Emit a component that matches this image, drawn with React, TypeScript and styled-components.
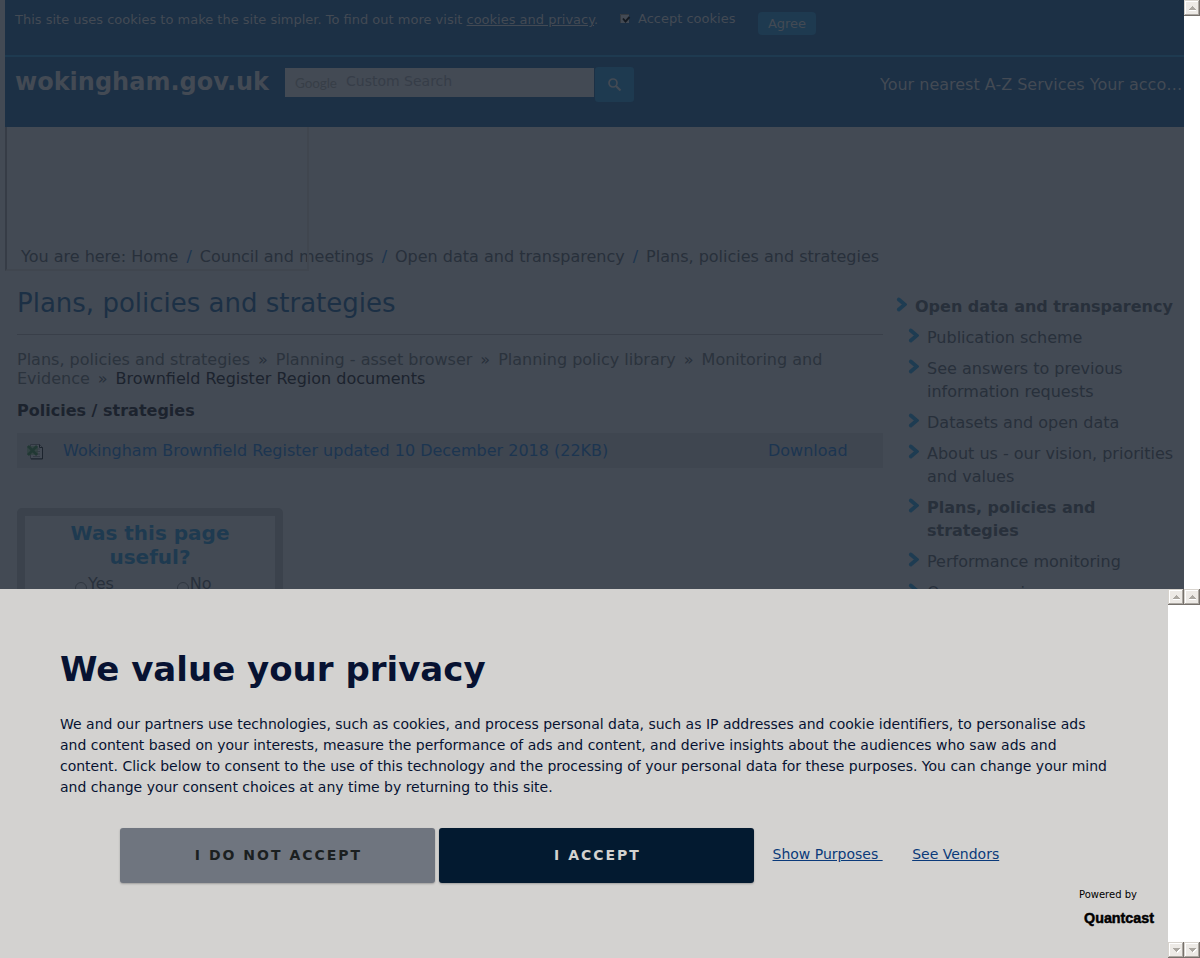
import React from "react";
import styled, { createGlobalStyle } from "styled-components";

const c = {
  page: "#434a54",
  navy: "#1c3045",
  teal: "#1e3a50",
  text: "#28303b",
  crumb: "#2b333d",
  strong: "#1c232e",
  link: "#1c3550",
  band: "#3f4650",
  frame: "#3b424c",
  modal: "#d3d2d0",
  ink: "#071232",
};

const Global = createGlobalStyle`
  * { box-sizing: border-box; }
  body { margin: 0; background: #fff; font: 16px/19px "DejaVu Sans", sans-serif; color: ${c.text}; overflow: hidden; }
  h1, h2, h3, p, ul { margin: 0; padding: 0; font-size: inherit; }
`;

const Screen = styled.div`
  width: 1200px;
  height: 958px;
  display: flex;
  flex-direction: column;
  overflow: hidden;
`;
const TopArea = styled.div`
  height: 589px;
  display: flex;
  overflow: hidden;
`;
const Page = styled.div`
  width: 1184px;
  height: 589px;
  padding-left: 5px;
  background: ${c.page};
  overflow: hidden;
`;
const CookieBar = styled.div`
  height: 57px;
  display: flex;
  align-items: flex-start;
  padding: 12px 0 0 10px;
  background: ${c.navy};
  border-bottom: 2px solid ${c.teal};
  color: ${c.page};
  font-size: 13px;
  line-height: 15px;
  white-space: nowrap;
`;
const CookieText = styled.p`
  width: 605px;
`;
const AcceptLabel = styled.div`
  display: flex;
  width: 138px;
  gap: 7px;
  line-height: 14px;
`;
const TickIcon = styled.svg`
  width: 11px;
  height: 11px;
  margin-top: 2px;
`;
const AgreeButton = styled.div`
  width: 58px;
  height: 23px;
  border-radius: 4px;
  background: ${c.teal};
  text-align: center;
  line-height: 23px;
`;
const Header = styled.header`
  height: 70px;
  display: flex;
  align-items: flex-start;
  padding-left: 10px;
  background: ${c.navy};
  color: ${c.page};
  white-space: nowrap;
`;
const SiteName = styled.div`
  width: 270px;
  padding-top: 11px;
  font-size: 24px;
  line-height: 29px;
  font-weight: bold;
`;
const SearchField = styled.div`
  width: 309px;
  height: 29px;
  margin: 11px 1px 0 0;
  padding-left: 9px;
  display: flex;
  background: ${c.page};
  color: #363d48;
  font-size: 14px;
  line-height: 27px;
`;
const GoogleMark = styled.svg`
  width: 52px;
  height: 29px;
`;
const SearchButton = styled.div`
  width: 39px;
  height: 35px;
  margin-top: 10px;
  padding: 11px 0 0 13px;
  border-radius: 3px;
  background: ${c.teal};
  line-height: 0;
`;
const Nav = styled.nav`
  margin: 18px 0 0 246px;
`;
const Main = styled.div`
  position: relative;
  display: flex;
`;
const EmptyFrame = styled.div`
  position: absolute;
  left: 0;
  top: 0;
  width: 304px;
  height: 144px;
  border: 2px solid #40464f;
  border-left-color: #363c46;
  border-top: 0;
`;
const Content = styled.main`
  width: 891px;
  padding: 120px 0 0 12px;
  white-space: nowrap;
`;
const Trail = styled.div`
  padding-left: 4px;
  span { color: ${c.link}; margin: 0 8px; }
`;
const Title = styled.h1`
  width: 866px;
  height: 69px;
  padding-top: 22px;
  font-size: 26px;
  line-height: 31px;
  font-weight: normal;
  color: ${c.navy};
  border-bottom: 1px solid #393f49;
`;
const Crumbs = styled.div`
  padding-top: 15px;
  color: ${c.crumb};
  span { color: ${c.text}; margin: 0 8px; }
  b { font-weight: normal; color: ${c.strong}; }
`;
const Section = styled.h2`
  padding-top: 13px;
  color: ${c.strong};
  line-height: 19px;
`;
const FileRow = styled.div`
  width: 866px;
  height: 35px;
  margin-top: 13px;
  padding: 8px 0 0 10px;
  display: flex;
  background: ${c.band};
  color: ${c.link};
`;
const FileIcon = styled.svg`
  width: 17px;
  height: 17px;
  margin: 2px 19px 0 0;
`;
const FileName = styled.div`
  width: 705px;
`;
const Survey = styled.div`
  width: 266px;
  height: 200px;
  margin-top: 40px;
  border: 8px solid ${c.frame};
  border-radius: 5px;
  padding-top: 5px;
`;
const SurveyTitle = styled.h3`
  color: ${c.teal};
  font-size: 20px;
  line-height: 24px;
  text-align: center;
`;
const Choices = styled.div`
  display: flex;
  gap: 63px;
  padding: 5px 0 0 50px;
`;
const Choice = styled.div`
  display: flex;
  gap: 1px;
`;
const Radio = styled.span`
  width: 12px;
  height: 12px;
  margin-top: 8px;
  border: 1px solid #303741;
  border-radius: 50%;
`;
const Sidebar = styled.ul`
  width: 288px;
  padding-top: 168px;
  list-style: none;
  line-height: 23px;
  white-space: nowrap;
`;
const SideItem = styled.li<{ $top?: boolean; $bold?: boolean }>`
  display: flex;
  gap: 8px;
  margin-bottom: 8px;
  padding-left: ${(p) => (p.$top ? 0 : 12)}px;
  font-weight: ${(p) => (p.$bold ? "bold" : "normal")};
`;
const Chevron = styled.svg`
  width: 11px;
  height: 15px;
  margin-top: 2px;
`;
const BottomArea = styled.div`
  height: 369px;
  display: flex;
`;
const Modal = styled.section`
  width: 1168px;
  height: 369px;
  padding: 60px 0 0 60px;
  background: ${c.modal};
  color: ${c.ink};
  white-space: nowrap;
`;
const ModalTitle = styled.h2`
  font-size: 34px;
  line-height: 40px;
`;
const ModalText = styled.p`
  padding-top: 25px;
  font-size: 13.99px;
  line-height: 21px;
`;
const Actions = styled.div`
  display: flex;
  padding: 30px 0 0 60px;
  font-size: 14px;
`;
const ActionButton = styled.div<{ $primary?: boolean }>`
  width: 315px;
  height: 55px;
  margin-right: 4px;
  padding-left: 2px;
  border-radius: 3px;
  background: ${(p) => (p.$primary ? "#031a30" : "#6f757f")};
  color: ${(p) => (p.$primary ? "#d3d2d0" : "#1b1f20")};
  box-shadow: 0 1px 2px rgba(0, 0, 0, 0.25);
  text-align: center;
  font-weight: bold;
  letter-spacing: 2px;
  line-height: 54px;
`;
const ModalLink = styled.a`
  margin: 0 15px 0 14.5px;
  color: #0a3a7a;
  text-decoration: underline;
  line-height: 52px;
  white-space: pre;
`;
const Powered = styled.div`
  display: flex;
  flex-direction: column;
  width: 80px;
  margin: 5px 0 0 1019px;
  font-size: 10px;
  line-height: 13px;
  color: #000;
`;
const QuantcastMark = styled.svg`
  width: 76px;
  height: 22px;
  margin-top: 6px;
`;
const Track = styled.div`
  width: 16px;
  height: 100%;
  display: flex;
  flex-direction: column;
  justify-content: space-between;
  background: #fff;
`;
const ArrowBox = styled.svg`
  width: 16px;
  height: 16px;
  display: block;
`;

function ScrollArrow({ down }: { down?: boolean }) {
  return (
    <ArrowBox viewBox="0 0 16 16" shapeRendering="crispEdges">
      <rect width="16" height="16" fill="#76716c" />
      <rect width="15" height="15" fill="#d8d4ce" />
      <rect x="1" y="1" width="14" height="14" fill="#aca8a2" />
      <rect x="1" y="1" width="13" height="13" fill="#fff" />
      <rect x="2" y="2" width="12" height="12" fill="#edeae6" />
      {down ? (
        <>
          <path d="M5 7h8l-4 4z" fill="#fff" />
          <path d="M4 6h8l-4 4z" fill="#aca8a2" />
        </>
      ) : (
        <>
          <path d="M5 10h7v1H5z" fill="#fff" />
          <path d="M4 10l4-4 4 4z" fill="#aca8a2" />
        </>
      )}
    </ArrowBox>
  );
}

const sideItems: { lines: string[]; top?: boolean; bold?: boolean }[] = [
  { lines: ["Open data and transparency"], top: true, bold: true },
  { lines: ["Publication scheme"] },
  { lines: ["See answers to previous", "information requests"] },
  { lines: ["Datasets and open data"] },
  { lines: ["About us - our vision, priorities", "and values"] },
  { lines: ["Plans, policies and", "strategies"], bold: true },
  { lines: ["Performance monitoring"] },
  { lines: ["Open mapping"] },
];

const Lines = ({ lines }: { lines: string[] }) => (
  <div>
    {lines.map((l) => (
      <div key={l}>{l}</div>
    ))}
  </div>
);

export default function App() {
  return (
    <Screen>
      <Global />
      <TopArea>
        <Page>
          <CookieBar>
            <CookieText>
              This site uses cookies to make the site simpler. To find out more visit <u>cookies and privacy</u>.
            </CookieText>
            <AcceptLabel>
              <TickIcon viewBox="0 0 11 11">
                <path d="M0 0h9v9H0z" fill="#434a54" />
                <path d="M.5 9V.5H9" fill="none" stroke="#343a41" />
                <path d="M3 4.500l2.500 3L9.500 3" fill="none" stroke="#141a22" strokeWidth="1.900" />
              </TickIcon>
              Accept cookies
            </AcceptLabel>
            <AgreeButton>Agree</AgreeButton>
          </CookieBar>
          <Header>
            <SiteName>wokingham.gov.uk</SiteName>
            <SearchField>
              <GoogleMark>
                <text x="1" y="19.5" fontFamily="Lato, sans-serif" fontSize="13.5" textLength="42" fill="#373e47">
                  Google
                </text>
              </GoogleMark>
              Custom Search
            </SearchField>
            <SearchButton>
              <svg width="14" height="14" viewBox="0 0 14 14" fill="none" stroke="#434a54">
                <circle cx="5" cy="5" r="4" strokeWidth="1.7" />
                <path d="M8 8l4.500 4.500" strokeWidth="2.200" />
              </svg>
            </SearchButton>
            <Nav>Your nearest A-Z Services Your acco…</Nav>
          </Header>
          <Main>
            <EmptyFrame />
            <Content>
              <Trail>
                You are here: Home<span>/</span>Council and meetings<span>/</span>Open data and transparency
                <span>/</span>Plans, policies and strategies
              </Trail>
              <Title>Plans, policies and strategies</Title>
              <Crumbs>
                Plans, policies and strategies<span>»</span>Planning - asset browser<span>»</span>Planning policy
                library<span>»</span>Monitoring and
                <br />
                Evidence<span>»</span>
                <b>Brownfield Register Region documents</b>
              </Crumbs>
              <Section>Policies / strategies</Section>
              <FileRow>
                <FileIcon viewBox="0 0 17 17">
                  <path d="M3.500 1.500h9l3 3v11h-12z" fill="#434a54" stroke="#2f3640" />
                  <path d="M12.500 1.500v3h3v11.500H4" fill="none" stroke="#1c242e" />
                  <path d="M9 6h4M9 8.500h4M9 11h4M6 13.500h7" stroke="#343b45" />
                  <path d="M0 3h11v9H0z" fill="#2f423f" fillOpacity="0.7" />
                  <path d="M1 3l9 9M10 3l-9 9" stroke="#213834" strokeWidth="2.600" />
                </FileIcon>
                <FileName>Wokingham Brownfield Register updated 10 December 2018 (22KB)</FileName>
                Download
              </FileRow>
              <Survey>
                <SurveyTitle>
                  Was this page
                  <br />
                  useful?
                </SurveyTitle>
                <Choices>
                  <Choice>
                    <Radio />
                    Yes
                  </Choice>
                  <Choice>
                    <Radio />
                    No
                  </Choice>
                </Choices>
              </Survey>
            </Content>
            <Sidebar>
              {sideItems.map((item) => (
                <SideItem key={item.lines[0]} $top={item.top} $bold={item.bold}>
                  <Chevron viewBox="0 0 11 15">
                    <path
                      d="M2.800 2.500l6 5-6 5"
                      fill="none"
                      stroke="#1e3c52"
                      strokeWidth="3.700"
                      strokeLinecap="round"
                    />
                  </Chevron>
                  <Lines lines={item.lines} />
                </SideItem>
              ))}
            </Sidebar>
          </Main>
        </Page>
        <Track>
          <ScrollArrow />
        </Track>
      </TopArea>
      <BottomArea>
        <Modal>
          <ModalTitle>We value your privacy</ModalTitle>
          <ModalText>
            We and our partners use technologies, such as cookies, and process personal data, such as IP addresses and
            cookie identifiers, to personalise ads
            <br />
            and content based on your interests, measure the performance of ads and content, and derive insights about
            the audiences who saw ads and
            <br />
            content. Click below to consent to the use of this technology and the processing of your personal data for
            these purposes. You can change your mind
            <br />
            and change your consent choices at any time by returning to this site.
          </ModalText>
          <Actions>
            <ActionButton>I DO NOT ACCEPT</ActionButton>
            <ActionButton $primary>I ACCEPT</ActionButton>
            <ModalLink>{"Show Purposes "}</ModalLink>
            <ModalLink>See Vendors</ModalLink>
          </Actions>
          <Powered>
            Powered by
            <QuantcastMark>
              <text
                x="5"
                y="16"
                fontFamily="Liberation Sans, sans-serif"
                fontSize="15"
                fontWeight="bold"
                textLength="70"
                lengthAdjust="spacingAndGlyphs"
                stroke="#000"
                strokeWidth="0.5"
              >
                Quantcast
              </text>
            </QuantcastMark>
          </Powered>
        </Modal>
        <Track>
          <ScrollArrow />
          <ScrollArrow down />
        </Track>
        <Track>
          <ScrollArrow />
          <ScrollArrow down />
        </Track>
      </BottomArea>
    </Screen>
  );
}
